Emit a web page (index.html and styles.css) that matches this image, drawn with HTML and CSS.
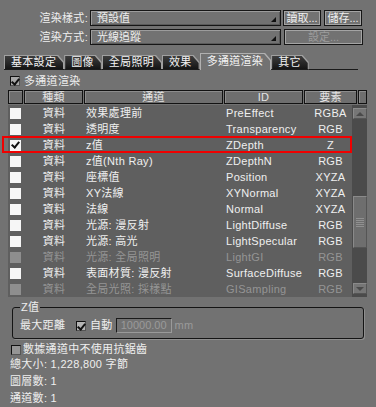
FILE: index.html
```html
<!DOCTYPE html>
<html lang="zh-Hant">
<head>
    <meta charset="UTF-8">
    <title>多通道渲染</title>
    <link rel="stylesheet" href="styles.css">
</head>
<body>
    <!-- Top controls: render preset and render mode -->
    <div class="ctrl-row">
        <span class="ctrl-label">渲染樣式:</span>
        <div class="select">預設值<span class="arrow"></span></div>
        <div class="btn">讀取...</div>
        <div class="btn">儲存...</div>
    </div>
    <div class="ctrl-row">
        <span class="ctrl-label">渲染方式:</span>
        <div class="select">光線追蹤<span class="arrow"></span></div>
        <div class="btn btn-wide disabled">設定...</div>
    </div>

    <!-- Tab strip -->
    <div class="tabs">
        <div class="tab"><span>基本設定</span></div>
        <div class="tab"><span>圖像</span></div>
        <div class="tab"><span>全局照明</span></div>
        <div class="tab"><span>效果</span></div>
        <div class="tab active"><span>多通道渲染</span></div>
        <div class="tab"><span>其它</span></div>
        <div class="tab-fill"></div>
    </div>

    <div class="check-row main-check">
        <span class="cb cb-gray checked"></span>多通道渲染
    </div>

    <!-- Channel list -->
    <div class="table">
        <div class="thead">
            <div class="th"></div>
            <div class="th">種類</div>
            <div class="th">通道</div>
            <div class="th">ID</div>
            <div class="th">要素</div>
            <div class="th"></div>
        </div>
        <div class="tbody">
            <div class="rows">
                <div class="row"><span class="cb cb-white"></span><span class="c-type">資料</span><span class="c-name">效果處理前</span><span class="c-id">PreEffect</span><span class="c-el">RGBA</span></div>
                <div class="row"><span class="cb cb-white"></span><span class="c-type">資料</span><span class="c-name">透明度</span><span class="c-id">Transparency</span><span class="c-el">RGB</span></div>
                <div class="row selected"><span class="cb cb-white checked"></span><span class="c-type">資料</span><span class="c-name">z值</span><span class="c-id">ZDepth</span><span class="c-el">Z</span></div>
                <div class="row"><span class="cb cb-white"></span><span class="c-type">資料</span><span class="c-name">z值(Nth Ray)</span><span class="c-id">ZDepthN</span><span class="c-el">RGB</span></div>
                <div class="row"><span class="cb cb-white"></span><span class="c-type">資料</span><span class="c-name">座標值</span><span class="c-id">Position</span><span class="c-el">XYZA</span></div>
                <div class="row"><span class="cb cb-white"></span><span class="c-type">資料</span><span class="c-name">XY法線</span><span class="c-id">XYNormal</span><span class="c-el">XYZA</span></div>
                <div class="row"><span class="cb cb-white"></span><span class="c-type">資料</span><span class="c-name">法線</span><span class="c-id">Normal</span><span class="c-el">XYZA</span></div>
                <div class="row"><span class="cb cb-white"></span><span class="c-type">資料</span><span class="c-name">光源: 漫反射</span><span class="c-id">LightDiffuse</span><span class="c-el">RGB</span></div>
                <div class="row"><span class="cb cb-white"></span><span class="c-type">資料</span><span class="c-name">光源: 高光</span><span class="c-id">LightSpecular</span><span class="c-el">RGB</span></div>
                <div class="row off"><span class="cb cb-off"></span><span class="c-type">資料</span><span class="c-name">光源: 全局照明</span><span class="c-id">LightGI</span><span class="c-el">RGB</span></div>
                <div class="row"><span class="cb cb-white"></span><span class="c-type">資料</span><span class="c-name">表面材質: 漫反射</span><span class="c-id">SurfaceDiffuse</span><span class="c-el">RGB</span></div>
                <div class="row off"><span class="cb cb-off"></span><span class="c-type">資料</span><span class="c-name">全局光照: 採樣點</span><span class="c-id">GISampling</span><span class="c-el">RGB</span></div>
            </div>
            <div class="scrollbar">
                <div class="sb-btn"><span class="tri-up"></span></div>
                <div class="sb-thumb"><span class="grip"></span></div>
                <div class="sb-btn sb-down"><span class="tri-down"></span></div>
            </div>
        </div>
    </div>

    <!-- Z depth options -->
    <div class="group">
        <span class="legend">Z值</span>
        <div class="zrow">
            <span class="zlabel">最大距離</span>
            <span class="cb cb-gray checked small"></span>
            <span class="auto">自動</span>
            <div class="num">10000.00</div>
            <span class="unit">mm</span>
        </div>
    </div>

    <div class="check-row aa-check">
        <span class="cb cb-gray"></span>數據通道中不使用抗鋸齒
    </div>
    <div class="info">
        <div>總大小: 1,228,800 字節</div>
        <div>圖層數: 1</div>
        <div>通道數: 1</div>
    </div>
</body>
</html>
```

FILE: styles.css
```css
body {
    margin: 0;
    background: #727272;
    color: #efefef;
    font: 11px/13px "Liberation Sans", "Noto Sans CJK TC", sans-serif;
    overflow: hidden;
}

/* Top rows */
.ctrl-row {
    display: flex;
    align-items: center;
    height: 16px;
    margin-top: 3px;
}
.ctrl-row:first-child {
    margin-top: 10px;
}
.ctrl-label {
    width: 88px;
    text-align: right;
    margin-right: 2px;
    letter-spacing: 0.3px;
}
.select {
    position: relative;
    box-sizing: border-box;
    width: 191px;
    height: 16px;
    margin-right: 2px;
    padding-left: 6px;
    border: 1px solid #161616;
    box-shadow: inset 1px 1px 0 #9c9c9c, inset -1px -1px 0 #5a5a5a;
    line-height: 14px;
}
.arrow {
    position: absolute;
    right: 4px;
    bottom: 3px;
    width: 0;
    height: 0;
    border-left: 5px solid transparent;
    border-bottom: 5px solid #111;
}
.btn {
    box-sizing: border-box;
    width: 38px;
    height: 16px;
    margin-right: 3px;
    border: 1px solid #161616;
    box-shadow: inset 1px 1px 0 #a4a4a4, inset -1px -1px 0 #a4a4a4;
    text-align: center;
    line-height: 14px;
}
.btn-wide {
    width: 79px;
    margin-left: 1px;
}
.disabled {
    color: #9c9c9c;
}

/* Tabs */
.tabs {
    display: flex;
    align-items: flex-end;
    height: 17px;
    margin-top: 8px;
    padding: 0 18px 0 4px;
}
.tab {
    height: 15px;
    padding: 1px 1px 0 1px;
    box-sizing: border-box;
    background: #a0a0a0;
    clip-path: polygon(0 0, calc(100% - 6px) 0, 100% 7px, 100% 100%, 0 100%);
    border-bottom: 1px solid #1a1a1a;
}
.tab span {
    display: block;
    height: 100%;
    padding: 0 7px 0 6px;
    background: linear-gradient(#3c3c3c, #151515);
    clip-path: polygon(0 0, calc(100% - 6px) 0, 100% 7px, 100% 100%, 0 100%);
    line-height: 13px;
    color: #f4f4f4;
    letter-spacing: 0.3px;
}
.tab.active {
    height: 17px;
    border-bottom: none;
    background: #b0b0b0;
}
.tab.active span {
    background: #727272;
    line-height: 14px;
}
.tab-fill {
    flex: 1;
    border-bottom: 1px solid #1a1a1a;
}

/* Checkboxes */
.cb {
    display: inline-block;
    flex: none;
    box-sizing: border-box;
    width: 10px;
    height: 10px;
    position: relative;
}
.cb-gray {
    background: #a8a8a8;
    border-top: 1px solid #111;
    border-left: 1px solid #111;
    border-right: 1px solid #555;
    border-bottom: 1px solid #555;
}
.cb-white {
    width: 11px;
    height: 11px;
    background: #f6f6f6;
}
.cb-off {
    width: 11px;
    height: 11px;
    background: #8e8e8e;
}
.cb.checked::after {
    content: "";
    position: absolute;
    left: 2px;
    top: 0;
    width: 3px;
    height: 6px;
    border-right: 2px solid #111;
    border-bottom: 2px solid #111;
    transform: rotate(40deg);
}
.cb-white.checked::after {
    left: 3px;
    top: 0;
}

.check-row {
    display: flex;
    align-items: center;
    letter-spacing: 0.3px;
}
.main-check {
    height: 16px;
    margin: 3px 0 0 10px;
}
.main-check .cb {
    margin-right: 4px;
}

/* Table */
.table {
    width: 359px;
    margin: 1px 0 0 8px;
}
.thead {
    display: grid;
    grid-template-columns: 15px 59px 139px 79px 53px 9px;
    column-gap: 1px;
    height: 14px;
}
.th {
    border: 1px solid #121212;
    box-shadow: inset 1px 1px 0 #8c8c8c;
    background: #6e6e6e;
    text-align: center;
    line-height: 12px;
    color: #e4e4e4;
    letter-spacing: 0.3px;
}
.tbody {
    display: flex;
    margin-top: 1px;
    height: 192px;
}
.rows {
    width: 344px;
    background: #5f5f5f;
}
.row {
    position: relative;
    display: grid;
    grid-template-columns: 16px 60px 140px 80px 48px;
    align-items: center;
    height: 16px;
    letter-spacing: 0.3px;
}
.row .cb {
    margin-left: 2px;
}
.c-type {
    text-align: center;
}
.c-name,
.c-id {
    padding-left: 2px;
    white-space: nowrap;
}
.c-el {
    text-align: center;
    padding-left: 5px;
}
.row.off {
    color: #959595;
}
.row.selected::after {
    content: "";
    position: absolute;
    left: -6px;
    top: -1px;
    right: 0;
    bottom: 0;
    border: 2px solid #f00000;
}

/* Scrollbar */
.scrollbar {
    width: 15px;
    box-sizing: border-box;
    background: #4b4b4b;
    display: flex;
    flex-direction: column;
    padding: 3px 0 3px 1px;
}
.sb-btn {
    height: 11px;
    width: 14px;
    box-sizing: border-box;
    background: #767676;
    border: 1px solid #8a8a8a;
    border-right-color: #555;
    border-bottom-color: #555;
    display: flex;
    align-items: center;
    justify-content: center;
}
.sb-down {
    margin-top: auto;
}
.tri-up {
    border-left: 4px solid transparent;
    border-right: 4px solid transparent;
    border-bottom: 4px solid #4a4a4a;
}
.tri-down {
    border-left: 4px solid transparent;
    border-right: 4px solid transparent;
    border-top: 4px solid #4a4a4a;
}
.sb-thumb {
    height: 52px;
    width: 14px;
    margin-top: 77px;
    box-sizing: border-box;
    background: #6e6e6e;
    border: 1px solid #8a8a8a;
    border-right-color: #555;
    border-bottom-color: #555;
    display: flex;
    align-items: center;
    justify-content: center;
}
.grip {
    width: 8px;
    height: 9px;
    background: repeating-linear-gradient(#909090 0 1px, transparent 1px 2px);
}

/* Z group */
.group {
    position: relative;
    height: 32px;
    margin: 10px 12px 0 12px;
    box-sizing: border-box;
    border: 1px solid #141414;
    border-radius: 3px;
    box-shadow: 1px 1px 0 #8e8e8e;
    padding: 10px 0 0 7px;
}
.legend {
    position: absolute;
    top: -7px;
    left: 7px;
    padding: 0 1px;
    background: #727272;
    letter-spacing: 0.3px;
}
.zrow {
    display: flex;
    align-items: center;
    height: 15px;
    letter-spacing: 0.3px;
}
.zlabel {
    width: 56px;
    white-space: nowrap;
}
.cb.small {
    background: #b4b4b4;
}
.auto {
    margin-left: 4px;
    white-space: nowrap;
}
.num {
    box-sizing: border-box;
    width: 56px;
    height: 15px;
    margin-left: 3px;
    padding-right: 4px;
    border: 1px solid #1a1a1a;
    border-right-color: #9a9a9a;
    border-bottom-color: #9a9a9a;
    text-align: right;
    line-height: 13px;
    color: #9a9a9a;
    letter-spacing: 0;
}
.unit {
    margin-left: 3px;
    color: #9a9a9a;
}

/* Footer */
.aa-check {
    height: 13px;
    margin: 4px 0 0 11px;
}
.aa-check .cb {
    margin-right: 2px;
    background: #959595;
}
.info {
    padding-left: 10px;
    line-height: 17px;
    letter-spacing: 0.3px;
}
```
